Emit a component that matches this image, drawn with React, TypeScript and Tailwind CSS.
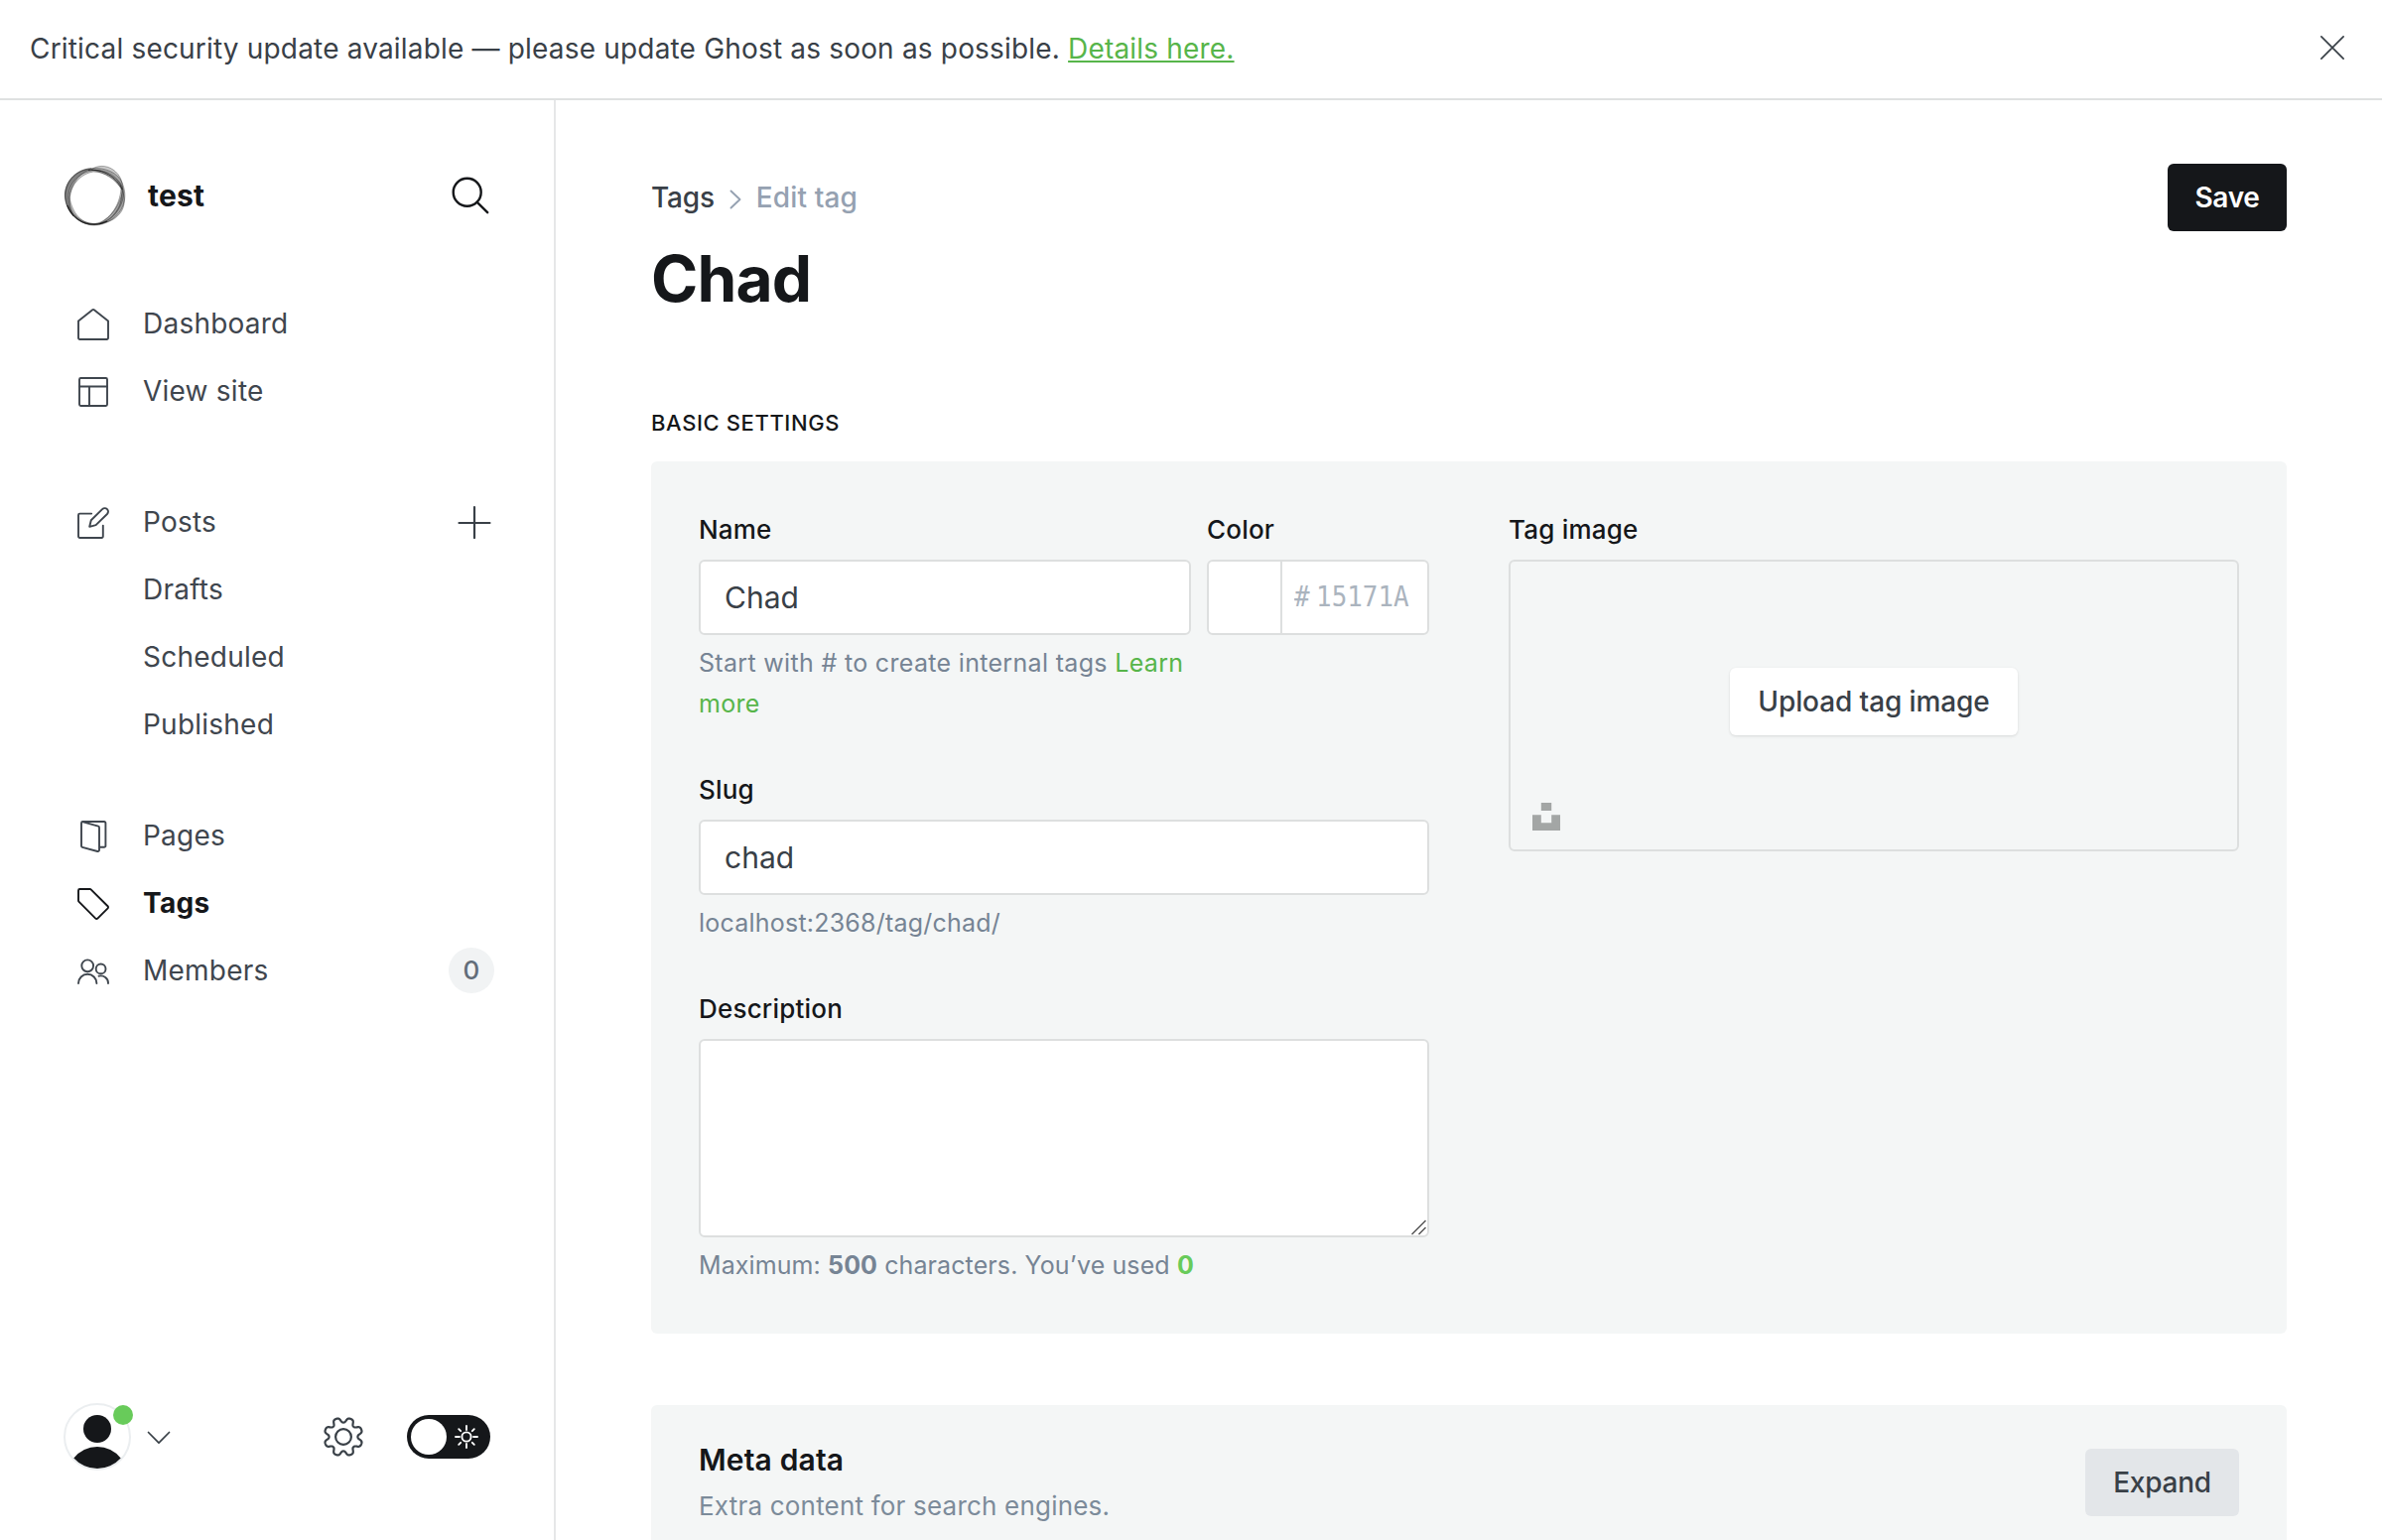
import type { ReactNode } from "react";

/* ---------- icons ---------- */

function Stroke({ children }: { children: ReactNode }) {
  return (
    <svg
      viewBox="0 0 32 32"
      className="h-8 w-8 shrink-0"
      fill="none"
      stroke="currentColor"
      strokeWidth="1.9"
      strokeLinecap="round"
      strokeLinejoin="round"
    >
      {children}
    </svg>
  );
}

const HomeIcon = () => (
  <Stroke>
    <path d="M1 12.6 15.2 1.3a1.3 1.3 0 0 1 1.6 0L31 12.6V29.6a1.4 1.4 0 0 1-1.4 1.4H2.4A1.4 1.4 0 0 1 1 29.6z" />
  </Stroke>
);

const SiteIcon = () => (
  <Stroke>
    <rect x="2" y="2" width="28" height="28" rx="1.4" />
    <path d="M2 10.5h28M12 10.5V30" />
  </Stroke>
);

const PostsIcon = () => (
  <Stroke>
    <path d="M14.2 6.6H2.4A1.4 1.4 0 0 0 1 8v21.6A1.4 1.4 0 0 0 2.4 31h22a1.4 1.4 0 0 0 1.4-1.4V18.6" />
    <path d="m18.6 18.1-6.4 1.7 1.6-6.6L25.1 2.1a3.5 3.5 0 0 1 4.9 0 3.5 3.5 0 0 1 0 4.9z" />
  </Stroke>
);

const PagesIcon = () => (
  <Stroke>
    <path d="M22 26.8h5a1.4 1.4 0 0 0 1.4-1.4V2.4A1.4 1.4 0 0 0 27 1H5.4A1.4 1.4 0 0 0 4 2.4V25.5a1.4 1.4 0 0 0 1 1.3l15.2 4.2a1.4 1.4 0 0 0 1.8-1.3V7a1.4 1.4 0 0 0-1-1.3L4.9 1.2" />
  </Stroke>
);

const TagIcon = () => (
  <Stroke>
    <path d="M13.6 1.4A1.4 1.4 0 0 0 12.6 1H2.4A1.4 1.4 0 0 0 1 2.4v10.2a1.4 1.4 0 0 0 .4 1L18.3 30.6a1.4 1.4 0 0 0 2 0L30.6 20.3a1.4 1.4 0 0 0 0-2z" />
  </Stroke>
);

const MembersIcon = () => (
  <Stroke>
    <circle cx="10.2" cy="10.3" r="5.9" />
    <path d="M1 28a9.2 9.2 0 0 1 18.4 0" />
    <circle cx="23.6" cy="13.4" r="4.9" />
    <path d="M21.6 20.7a7.3 7.3 0 0 1 9.4 7.3" />
  </Stroke>
);

/* Eight rounded teeth around the hub. */
const gearPath =
  Array.from({ length: 320 }, (_, i) => {
    const a = (i / 320) * Math.PI * 2;
    const wave = Math.tanh(-1.5 * Math.cos(8 * a) + 0.3) / Math.tanh(1.8);
    const r = 16.8 + 2.7 * wave;
    return `${i ? "L" : "M"}${(21 + r * Math.cos(a)).toFixed(2)} ${(21 + r * Math.sin(a)).toFixed(2)}`;
  }).join("") + "Z";

const GearIcon = () => (
  <svg viewBox="0 0 42 42" className="size-[42px]" fill="none" stroke="#394047" strokeWidth="2.2" strokeLinejoin="round">
    <path d={gearPath} />
    <circle cx="21" cy="21" r="7.9" />
  </svg>
);

const Ring = () => (
  <svg viewBox="0 0 64 64" className="size-16 shrink-0" fill="none">
    <g fill="#000" fillOpacity="0.2" fillRule="evenodd" stroke="#1b1b1b" strokeOpacity="0.6" strokeWidth="0.6">
      <path d="M59 19C62 26 63 34 60 42 56 53 44 62 31 62 16 62 3 49 1.5 34 0 19 12 6 28 4.5 42 3.5 55 9 59 19zM57 20C51 10 40 5.5 29 7 15 9 5 20 5 34 5 48 16 60 31 60.5 44 60.5 52 52 56.5 42 59 34 60 27 57 20z" />
      <path d="M60.5 27C62 42 48 61.5 31 61.5 14 61.5 2 47 2 31 3 14 18 4 30 6 45 7 59 17 60.5 27zM58 25C52 14 42 8.5 30 8 17 10 7 22 6 34 9 50 18 61 32 60.5 46 58 57 42 58 25z" />
      <path d="M28 6C33 1.5 43 1 50 6 57 11 60 18 59.5 27 53 16 42 9 28 6z" />
      <path d="M59.5 27C63 36 61.5 47 54 53 49 58 42 59.5 36 60.5 48 54 57 42 59.5 27z" />
      <path d="M28 5C14 5 1 17 1.5 33 2 42 6 49 10 53 6 44 5 36 8 26 12 14 20 8 28 5z" />
    </g>
    <path d="M4 42C8 53 18 61.2 31 61.2 36 61.2 40 60 44 58" stroke="#111" strokeOpacity="0.85" strokeWidth="1.2" />
    <path d="M25 6.5C40 5 53 13 59.5 26" stroke="#111" strokeOpacity="0.7" strokeWidth="1" />
  </svg>
);

/* ---------- sidebar ---------- */

function NavRow({ icon, label, active, children }: { icon?: ReactNode; label: string; active?: boolean; children?: ReactNode }) {
  return (
    <a
      className={
        active
          ? "flex h-[68px] items-center pr-16 pl-[78px] font-bold tracking-[0.3px] text-[#15171a]"
          : "flex h-[68px] items-center pr-16 pl-[78px] tracking-[0.23px] text-[#3f464e]"
      }
    >
      <span className="mt-0.5 mr-[34px] flex h-8 w-8">{icon}</span>
      <span className="flex-1">{label}</span>
      {children}
    </a>
  );
}

function Sidebar() {
  return (
    <nav className="flex w-[560px] shrink-0 flex-col border-r-2 border-[#e6e7e8] text-[28px] leading-[40px]">
      <header className="mt-[64px] flex h-16 items-center pr-[65px] pl-[64px]">
        <Ring />
        <span className="ml-[21px] flex-1 text-[30px] font-bold tracking-[0.2px] text-[#15171a]">test</span>
        <svg viewBox="0 0 38 38" className="size-[38px]" fill="none" stroke="#15171a" strokeWidth="2.4" strokeLinecap="round">
          <circle cx="15.7" cy="15.7" r="14" />
          <path d="m25.8 25.8 10.4 10.4" />
        </svg>
      </header>

      <div className="mt-[63px]">
        <NavRow icon={<HomeIcon />} label="Dashboard" />
        <NavRow icon={<SiteIcon />} label="View site" />
      </div>

      <div className="mt-16">
        <NavRow icon={<PostsIcon />} label="Posts">
          <svg viewBox="0 0 34 34" className="-mr-px size-[34px]" fill="none" stroke="#394047" strokeWidth="2.2" strokeLinecap="round">
            <path d="M1.5 18h31M17 2v31" />
          </svg>
        </NavRow>
        <NavRow label="Drafts" />
        <NavRow label="Scheduled" />
        <NavRow label="Published" />
      </div>

      <div className="mt-11">
        <NavRow icon={<PagesIcon />} label="Pages" />
        <NavRow icon={<TagIcon />} label="Tags" active />
        <NavRow icon={<MembersIcon />} label="Members">
          <span className="-mr-1 flex size-[46px] items-center justify-center rounded-full bg-[#f1f3f4] text-[26px] font-medium tracking-normal text-[#626d79]">
            0
          </span>
        </NavRow>
      </div>

      <footer className="mt-auto mb-[70px] flex h-[68px] items-center pr-16 pl-16">
        <div className="relative size-[68px]">
          <svg viewBox="0 0 68 68" className="size-[68px]">
            <circle cx="34" cy="34" r="33" fill="#fff" stroke="#ebeef0" strokeWidth="2" />
            <circle cx="34" cy="26" r="14" fill="#15171a" />
            <path d="M10.3 55.5A30 30 0 0 1 57.7 55.5 32 32 0 0 1 10.3 55.5z" fill="#15171a" />
          </svg>
          <span className="absolute top-[2px] left-[50px] size-5 rounded-full bg-[#68cb5a]" />
        </div>
        <svg viewBox="0 0 24 14" className="mt-px ml-4 h-[14px] w-6" fill="none" stroke="#394047" strokeWidth="1.7" strokeLinecap="round" strokeLinejoin="round">
          <path d="M1.5 1.5 12 12.2 22.5 1.5" />
        </svg>
        <span className="flex-1" />
        <GearIcon />
        <span className="ml-[43px] flex h-11 w-[84px] items-center rounded-full bg-[#15171a] pl-1">
          <span className="size-9 rounded-full bg-white" />
          <svg viewBox="0 0 24 24" className="ml-2 size-6" fill="none" stroke="#fff" strokeWidth="1.9" strokeLinecap="round">
            <circle cx="12" cy="12" r="4.6" />
            <path d="M12 1v4M12 19v4M1 12h4M19 12h4M4.2 4.2l2 2M17.8 17.8l2 2M4.2 19.8l2-2M17.8 6.2l2-2" />
          </svg>
        </span>
      </footer>
    </nav>
  );
}

/* ---------- form ---------- */

const Label = ({ children }: { children: ReactNode }) => (
  <label className="block h-[36px] text-[26px] leading-[36px] font-medium tracking-[0.2px] text-[#15171a]">{children}</label>
);

const Hint = ({ children }: { children: ReactNode }) => (
  <div className="mt-2 text-[25px] leading-[41px] text-[#768494]">{children}</div>
);

const Field = ({ children }: { children: ReactNode }) => (
  <div className="mt-3 flex h-[76px] items-center rounded-md border-2 border-[#dddfdf] bg-white pl-6 text-[30px] leading-[44px] text-[#394047]">
    {children}
  </div>
);

function BasicSettings() {
  return (
    <section className="mt-[23px] flex h-[879px] gap-20 rounded-md bg-[#f4f6f6] px-12 pt-[51px]">
      <div className="w-[736px]">
        <div className="flex gap-4">
          <div className="w-[496px]">
            <Label>Name</Label>
            <Field>Chad</Field>
            <Hint>
              <p className="tracking-[0.32px] whitespace-nowrap">
                Start with # to create internal tags <a className="text-[#57b54a]">Learn</a>
              </p>
              <p className="tracking-[0.32px] text-[#57b54a]">more</p>
            </Hint>
          </div>
          <div className="w-[224px]">
            <Label>Color</Label>
            <div className="mt-3 flex h-[76px] rounded-md border-2 border-[#dddfdf] bg-white">
              <span className="w-[74px] border-r-2 border-[#dddfdf]" />
              <span className="ml-3 flex origin-left scale-x-[0.925] items-center font-['DejaVu_Sans_Mono',monospace] text-[28px] text-[#abb4be]">
                <span className="mr-[7px]">#</span>
                <span>15171A</span>
              </span>
            </div>
          </div>
        </div>

        <div className="mt-12">
          <Label>Slug</Label>
          <Field>chad</Field>
          <Hint>
            <p className="tracking-[0.22px]">localhost:2368/tag/chad/</p>
          </Hint>
        </div>

        <div className="mt-12">
          <Label>Description</Label>
          <div className="mt-3 flex h-[200px] items-end justify-end rounded-md border-2 border-[#dddfdf] bg-white">
            <svg viewBox="0 0 16 16" className="size-4" fill="none" stroke="#555" strokeWidth="1.5">
              <path d="M.5 15 14.5 1M7.5 15l7-7" />
            </svg>
          </div>
          <Hint>
            <p className="tracking-[0.1px]">
              Maximum: <b className="font-bold">500</b> characters. You’ve used <b className="font-bold text-[#68cb5a]">0</b>
            </p>
          </Hint>
        </div>
      </div>

      <div className="w-[736px]">
        <Label>Tag image</Label>
        <div className="relative mt-3 flex h-[294px] items-center justify-center rounded-md border-2 border-[#dddfdf]">
          <button className="mt-[-8px] h-[68px] w-[290px] rounded-md bg-white text-[28px] font-medium tracking-[-0.1px] text-[#394047] shadow-[0_1px_3px_rgba(0,0,0,0.12)]">
            Upload tag image
          </button>
          <svg viewBox="0 0 28 28" className="absolute bottom-[19px] left-[22px] size-7" fill="#a3a6a5">
            <path d="M8.8 0h10.4v8H8.8zM0 12.2h8.8v8h10.4v-8H28V28H0z" />
          </svg>
        </div>
      </div>
    </section>
  );
}

export default function App() {
  return (
    <div className="flex h-[1552px] w-[2400px] flex-col overflow-hidden bg-white font-['Inter',sans-serif] antialiased">
      <div className="flex h-[101px] shrink-0 items-center justify-between border-b-2 border-[#dfe1e1] pr-[38px] pl-[30px] text-[28px] leading-[40px] tracking-[0.18px] text-[#394047]">
        <p className="-mt-px">
          Critical security update available — please update Ghost as soon as possible.{" "}
          <a className="text-[#57b54a] underline">Details here.</a>
        </p>
        <svg viewBox="0 0 24 24" className="-mt-[3px] size-6" fill="none" stroke="#394047" strokeWidth="1.7" strokeLinecap="round">
          <path d="m.9.9 22.2 22.2M23.1.9.9 23.1" />
        </svg>
      </div>

      <div className="flex min-h-0 flex-1">
        <Sidebar />
        <main className="flex-1 overflow-hidden px-24 pt-16">
          <div className="flex h-[68px] items-center justify-between">
            <div className="flex items-center text-[28px] leading-[40px] font-medium">
              <span className="tracking-[-0.2px] text-[#394047]">Tags</span>
              <svg viewBox="0 0 12 20" className="mt-[3px] mr-[15px] ml-[15px] h-5 w-3" fill="none" stroke="#95a1b1" strokeWidth="1.9" strokeLinecap="round" strokeLinejoin="round">
                <path d="m1.5 1.5 9 8.5-9 8.5" />
              </svg>
              <span className="tracking-[0.15px] text-[#95a1b1]">Edit tag</span>
            </div>
            <button className="h-[68px] w-[120px] rounded-md bg-[#15171a] text-[28px] font-semibold tracking-[-0.3px] text-white">Save</button>
          </div>
          <h1 className="mt-[8px] text-[64px] leading-[80px] font-bold tracking-[-0.9px] text-[#15171a]">Chad</h1>

          <h4 className="mt-[89px] text-[22px] leading-[32px] font-medium tracking-[0.6px] text-[#15171a]">BASIC SETTINGS</h4>
          <BasicSettings />

          <section className="mt-[72px] flex h-[220px] justify-between rounded-md bg-[#f4f6f6] px-12">
            <div className="pt-9">
              <h4 className="text-[30px] leading-[38px] font-semibold tracking-[0.15px] text-[#15171a]">Meta data</h4>
              <p className="mt-[8px] text-[26px] leading-[40px] tracking-[0.2px] text-[#7c8b9a]">Extra content for search engines.</p>
            </div>
            <button className="mt-11 h-[68px] w-[155px] rounded-md bg-[#e3e6e9] text-[28px] font-medium tracking-[-0.25px] text-[#394047]">Expand</button>
          </section>
        </main>
      </div>
    </div>
  );
}
